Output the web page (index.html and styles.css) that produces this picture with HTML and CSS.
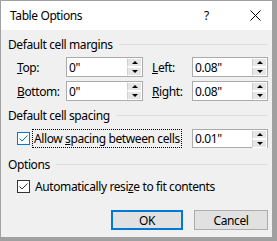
FILE: index.html
```html
<!DOCTYPE html>
<html lang="en">
<head>
  <meta charset="UTF-8" />
  <title>Table Options</title>
  <link rel="stylesheet" href="styles.css">
</head>
<body>
  <div class="dialog">
    <div class="titlebar">
      <span class="title">Table Options</span>
      <span class="help">?</span>
      <svg class="close" width="11" height="11" viewBox="0 0 11 11">
        <path d="M0.5 0.5 L10.5 10.5 M10.5 0.5 L0.5 10.5" stroke="#000" stroke-width="1" fill="none" />
      </svg>
    </div>

    <div class="content">
      <div class="group-head"><span>Default cell margins</span><i></i></div>
      <div class="margins">
        <label><u>T</u>op:</label>
        <div class="spin"><span class="val">0"</span><div class="arrows"><b class="up"></b><b class="down"></b></div></div>
        <label class="second"><u>L</u>eft:</label>
        <div class="spin"><span class="val">0.08"</span><div class="arrows"><b class="up"></b><b class="down"></b></div></div>
        <label><u>B</u>ottom:</label>
        <div class="spin"><span class="val">0"</span><div class="arrows"><b class="up"></b><b class="down"></b></div></div>
        <label class="second"><u>R</u>ight:</label>
        <div class="spin"><span class="val">0.08"</span><div class="arrows"><b class="up"></b><b class="down"></b></div></div>
      </div>

      <div class="group-head spaced"><span>Default cell spacing</span><i></i></div>
      <div class="spacing-row">
        <div class="check">
          <svg width="13" height="13" viewBox="0 0 13 13">
            <rect x="0.5" y="0.5" width="12" height="12" fill="#fff" stroke="#0078d7" />
            <polyline points="2.5,6.5 5,9 10.5,3.5" fill="none" stroke="#0078d7" stroke-width="1" />
          </svg>
          <span class="focus-label">Allow <u>s</u>pacing between cells</span>
        </div>
        <div class="spin"><span class="val">0.01"</span><div class="arrows"><b class="up"></b><b class="down"></b></div></div>
      </div>

      <div class="group-head spaced-more"><span>Options</span><i></i></div>
      <div class="check plain">
        <svg width="13" height="13" viewBox="0 0 13 13">
          <rect x="0.5" y="0.5" width="12" height="12" fill="#fff" stroke="#333" />
          <polyline points="2.5,6.5 5,9 10.5,3.5" fill="none" stroke="#333" stroke-width="1" />
        </svg>
        <span>Automatically resi<u>z</u>e to fit contents</span>
      </div>

      <div class="buttons">
        <button class="btn default">OK</button>
        <button class="btn">Cancel</button>
      </div>
    </div>
  </div>
</body>
</html>
```

FILE: styles.css
```css
body {
  margin: 0;
  font-family: 'Noto Sans', 'Open Sans', sans-serif;
  font-size: 12px;
  letter-spacing: -0.4px;
  color: #000;
  background: #a0a0a0;
}
.dialog {
  box-sizing: border-box;
  width: 277px;
  height: 241px;
  border: 1px solid #a0a0a0;
  border-right-width: 5px;
  border-bottom-width: 4px;
  background: #f0f0f0;
  display: flex;
  flex-direction: column;
  overflow: hidden;
}
.titlebar {
  height: 29px;
  flex-shrink: 0;
  background: #fff;
  display: flex;
  align-items: center;
  padding-left: 9px;
}
.title {
  flex: 1;
}
.help {
  width: 10px;
  margin-right: 36px;
}
.close {
  margin-right: 11px;
}
.content {
  flex: 1;
  padding: 7px 4px 0 7px;
  display: flex;
  flex-direction: column;
}
.group-head {
  display: flex;
  align-items: center;
  height: 15px;
  flex-shrink: 0;
}
.group-head i {
  flex: 1;
  height: 1px;
  background: #dcdcdc;
  margin-left: 6px;
}
.group-head.spaced {
  margin-top: 7px;
}
.group-head.spaced-more {
  margin-top: 9px;
}
.margins {
  display: grid;
  grid-template-columns: 49px 77px 49px 76px;
  row-gap: 4px;
  align-items: center;
  padding-left: 9px;
  margin-top: 5px;
}
.margins .second {
  padding-left: 9px;
}
.spin {
  box-sizing: border-box;
  height: 20px;
  border: 1px solid #ababab;
  background: #fff;
  display: flex;
  align-items: center;
}
.val {
  flex: 1;
  padding-left: 2px;
}
.arrows {
  width: 15px;
  height: 18px;
  display: flex;
  flex-direction: column;
}
.arrows b {
  flex: 1;
  box-sizing: border-box;
  background: #e6e6e6;
  border: 1px solid #fff;
  border-left-color: #d0d0d0;
  position: relative;
}
.arrows b::after {
  content: '';
  position: absolute;
  left: 4px;
  border-left: 3px solid transparent;
  border-right: 3px solid transparent;
}
.arrows .up::after {
  top: 2px;
  border-bottom: 3px solid #000;
}
.arrows .down::after {
  top: 2px;
  border-top: 3px solid #000;
}
.spacing-row {
  display: flex;
  align-items: center;
  margin-top: 6px;
  padding-left: 9px;
}
.spacing-row .check {
  width: 175px;
}
.spacing-row .spin {
  width: 76px;
  height: 19px;
}
.check {
  display: flex;
  align-items: center;
  gap: 3px;
}
.focus-label {
  outline: 1px dotted #000;
  padding: 1px 1px;
  line-height: 15px;
  white-space: nowrap;
}
.plain {
  margin-top: 7px;
  padding-left: 9px;
  gap: 5px;
  height: 15px;
}
.buttons {
  display: flex;
  justify-content: flex-end;
  gap: 11px;
  margin-top: 16px;
}
.btn {
  box-sizing: border-box;
  width: 74px;
  height: 20px;
  border: 1px solid #adadad;
  background: #e1e1e1;
  font-family: inherit;
  font-size: 12px;
  letter-spacing: inherit;
  padding: 0;
  color: #000;
}
.btn.default {
  border: 2px solid #0078d7;
  width: 72px;
}
```
